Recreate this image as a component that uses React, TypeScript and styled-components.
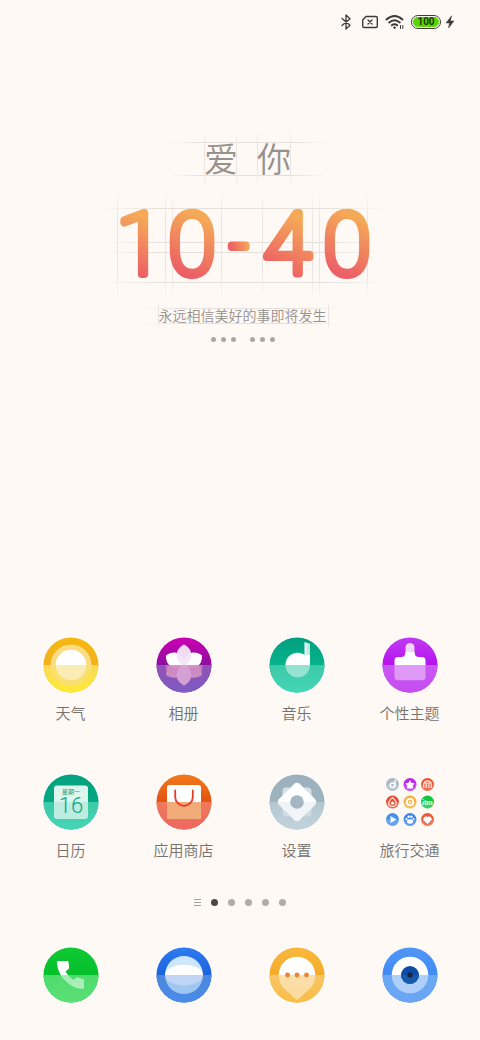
import React, { useId } from 'react';
import styled, { createGlobalStyle } from 'styled-components';

const GlobalStyle = createGlobalStyle`
  * { box-sizing: border-box; }
  body {
    margin: 0;
    background: #fef9f4;
    font-family: Roboto, "Noto Sans CJK SC", sans-serif;
  }
  button {
    border: 0;
    padding: 0;
    background: none;
    font: inherit;
    color: inherit;
    cursor: pointer;
  }
`;

const Screen = styled.main`
  display: flex;
  flex-direction: column;
  min-height: 100vh;
  padding-bottom: 35px;
`;

const StatusBar = styled.header`
  display: flex;
  align-items: center;
  justify-content: flex-end;
  height: 44px;
  padding-right: 25px;
`;

const StatusIcon = styled.svg<{ $gap: number }>`
  display: block;
  margin-right: ${(p) => p.$gap}px;
  fill: none;
  stroke: #3c3a39;
  stroke-linecap: round;
  stroke-linejoin: round;
`;

const Battery = styled.div`
  display: flex;
  width: 30px;
  height: 14px;
  margin-right: 4px;
  padding: 1px;
  border: 1px solid #3c3a39;
  border-radius: 7px;
`;

const BatteryLevel = styled.span`
  flex: 1;
  border-radius: 5px;
  background: #57d500;
  color: #1d3a08;
  font-size: 10px;
  font-weight: 700;
  line-height: 10px;
  text-align: center;
`;

const ClockWidget = styled.section`
  display: flex;
  flex-direction: column;
  align-items: center;
  padding: 86px 0 0 5px;
`;

const Guided = styled.div`
  position: relative;
  isolation: isolate;
  display: flex;
  justify-content: center;
`;

const GuideLines = styled.svg`
  position: absolute;
  z-index: -1;
  inset: 0;
  width: 100%;
  height: 100%;
`;

const Greeting = styled(Guided)`
  gap: 19px;
  width: 156px;
  height: 58px;
  margin-left: 10px;
  color: #96918e;
  font-family: "Noto Sans CJK SC", sans-serif;
  font-size: 34px;
  font-weight: 350;
  line-height: 56px;
`;

const Time = styled(Guided)`
  width: 282px;
  height: 108px;
  margin-top: 4px;
`;

const TimeFace = styled.svg`
  display: block;
  width: 100%;
  height: 100%;
  font-family: Roboto, sans-serif;
  font-size: 86px;
  font-weight: 100;
  stroke-width: 8px;
  stroke-linejoin: round;
  text-anchor: middle;
`;

const Motto = styled(Guided)`
  width: 196px;
  height: 28px;
  margin-top: 2px;
  color: #96918e;
  font-size: 14px;
  font-weight: 350;
  line-height: 28px;
`;

const MottoDots = styled.div`
  display: flex;
  gap: 14px;
  margin-top: 7px;
`;

const DotGroup = styled.div`
  display: flex;
  gap: 5px;
`;

const MottoDot = styled.i`
  width: 5px;
  height: 5px;
  border-radius: 50%;
  background: #aba7a4;
`;

const AppGrid = styled.section`
  display: grid;
  grid-template-columns: repeat(4, 1fr);
  row-gap: 48px;
  margin-top: auto;
  padding: 0 14px;
`;

const AppButton = styled.button`
  display: flex;
  flex-direction: column;
  align-items: center;
  gap: 9px;
`;

const AppLabel = styled.span`
  color: #75716e;
  font-size: 15px;
  line-height: 20px;
  font-weight: 350;
`;

const IconSvg = styled.svg`
  display: block;
  width: 60px;
  height: 60px;
`;

const Pager = styled.nav`
  display: flex;
  align-items: center;
  justify-content: center;
  gap: 10px;
  height: 12px;
  margin: 35px 0 37px;
`;

const PageDot = styled.button<{ $active?: boolean }>`
  width: 7px;
  height: 7px;
  border-radius: 50%;
  background: ${(p) => (p.$active ? '#4a4745' : '#b0acaa')};
`;

const FeedButton = styled.button`
  display: flex;
  flex-direction: column;
  gap: 2px;
  width: 7px;
`;

const FeedLine = styled.i`
  height: 1px;
  background: #a5a19e;
`;

const Dock = styled.nav`
  display: grid;
  grid-template-columns: repeat(4, 1fr);
  padding: 0 14px;
`;

function Guides({ w, h, xs, ys }: { w: number; h: number; xs: number[]; ys: number[] }) {
  const id = useId();
  return (
    <GuideLines viewBox={`0 0 ${w} ${h}`} aria-hidden="true">
      <defs>
        <linearGradient id={`${id}h`} gradientUnits="userSpaceOnUse" x1="0" x2={w}>
          <stop offset="0" stopColor="#e6e0db" stopOpacity="0" />
          <stop offset=".2" stopColor="#e6e0db" />
          <stop offset=".8" stopColor="#e6e0db" />
          <stop offset="1" stopColor="#e6e0db" stopOpacity="0" />
        </linearGradient>
        <linearGradient id={`${id}v`} gradientUnits="userSpaceOnUse" x1="0" y1="0" x2="0" y2={h}>
          <stop offset="0" stopColor="#ebe5e1" stopOpacity="0" />
          <stop offset=".25" stopColor="#ebe5e1" />
          <stop offset=".75" stopColor="#ebe5e1" />
          <stop offset="1" stopColor="#ebe5e1" stopOpacity="0" />
        </linearGradient>
      </defs>
      {ys.map((y) => (
        <rect key={y} x="0" y={y} width={w} height="1" fill={`url(#${id}h)`} />
      ))}
      {xs.map((x) => (
        <rect key={x} x={x} y="0" width="1" height={h} fill={`url(#${id}v)`} />
      ))}
    </GuideLines>
  );
}

/* Each character carries its own diagonal gradient. */
const timeChars = [
  { c: '1', x: 38, y: 82, size: 86, from: [22, 78], to: [44, 26] },
  { c: '0', x: 90, y: 82, size: 86, from: [79, 80], to: [101, 26] },
  { c: '-', x: 137, y: 74, size: 60, from: [128, 54], to: [147, 50] },
  { c: '4', x: 185, y: 82, size: 86, from: [168, 76], to: [196, 26] },
  { c: '0', x: 245, y: 82, size: 86, from: [234, 80], to: [256, 26] },
];

function TimeDigits() {
  return (
    <TimeFace viewBox="0 0 282 108">
      <defs>
        {timeChars.map((t, i) => (
          <linearGradient
            key={i}
            id={`digit${i}`}
            gradientUnits="userSpaceOnUse"
            x1={t.from[0]}
            y1={t.from[1]}
            x2={t.to[0]}
            y2={t.to[1]}
          >
            <stop offset="0" stopColor="#ec5f66" />
            <stop offset="1" stopColor="#f5a957" />
          </linearGradient>
        ))}
      </defs>
      <text>
        {timeChars.map((t, i) => (
          <tspan
            key={i}
            x={t.x}
            y={t.y}
            fontSize={t.size}
            fill={`url(#digit${i})`}
            stroke={`url(#digit${i})`}
          >
            {t.c}
          </tspan>
        ))}
      </text>
    </TimeFace>
  );
}

type Tone = [string, string];

interface DiscProps {
  top: Tone;
  bottom: Tone;
  veil?: number;
  children: React.ReactNode;
  over?: React.ReactNode;
}

/* Round icon split by a horizon: the lower half is veiled with its own tone. */
function Disc({ top, bottom, veil = 0.5, children, over }: DiscProps) {
  const id = useId();
  const lower = 'M-27.5 0H27.5A27.5 27.5 0 0 1-27.5 0Z';
  return (
    <IconSvg viewBox="-30 -30 60 60" aria-hidden="true">
      <defs>
        <linearGradient id={`${id}t`} x2="0" y2="1">
          <stop offset="0" stopColor={top[0]} />
          <stop offset=".5" stopColor={top[1]} />
        </linearGradient>
        <linearGradient id={`${id}b`} x2="0" y2="1">
          <stop offset="0" stopColor={bottom[0]} />
          <stop offset="1" stopColor={bottom[1]} />
        </linearGradient>
      </defs>
      <circle r="28.7" fill="#fff" opacity=".7" />
      <circle r="27.5" fill={`url(#${id}t)`} />
      <path d={lower} fill={`url(#${id}b)`} />
      {children}
      <path d={lower} fill={`url(#${id}b)`} opacity={veil} />
      {over}
    </IconSvg>
  );
}

const Weather = () => (
  <Disc
    top={['#f7b80f', '#f3b01c']}
    bottom={['#fad95a', '#fdea35']}
    veil={0}
  >
    <circle r="20.5" fill="#fbdc85" />
    <circle r="15.2" fill="#fff" />
    <path d="M-20.500 0H20.500A20.500 20.500 0 0 1-20.500 0Z" fill="#fae070" />
    <path d="M-15.200 0H15.200A15.200 15.200 0 0 1-15.200 0Z" fill="#fbebb4" />
  </Disc>
);

const petal = 'M0 2C-5-2-8-7-7.200-12C-6.500-16-3.500-18.500 0-20.500C3.500-18.500 6.500-16 7.200-12C8-7 5-2 0 2Z';

const Gallery = () => (
  <Disc top={['#cc00b4', '#8d0fa0']} bottom={['#9452b4', '#7c5cc4']} veil={0.35}>
    <g fill="#f2abcb">
      <path d={petal} transform="rotate(120)" />
      <path d={petal} transform="rotate(240)" />
    </g>
    <path d={petal} transform="rotate(62)" fill="#fff" />
    <path d={petal} transform="rotate(-62)" fill="#fff" />
    <path d="M-18.500 0H18.500Q18.500 8 12 9H-12Q-18.500 8-18.500 0Z" fill="#f0a3c6" opacity=".75" />
    <path d={petal} transform="rotate(180)" fill="#fbc9e0" />
    <path d={petal} fill="#f4e6f8" opacity=".95" />
  </Disc>
);

const Music = () => (
  <Disc top={['#009f7f', '#08b28c']} bottom={['#3cc9a8', '#45d6b6']} veil={0.55}>
    <path d="M7.500-23L13-21V0H7.500Z" fill="#f0fbf8" />
    <path d="M9.500-22.300L13-21V0H9.500Z" fill="#bdebdd" />
    <circle cx=".7" r="12.300" fill="#fff" />
    <path d="M7.500-10H13V0H7.500Z" fill="#fff" />
  </Disc>
);

const Themes = () => (
  <Disc top={['#c13af3', '#b413ec']} bottom={['#cb58f2', '#c54df0']} veil={0.6}>
    <path d="M-4.500-17.500A4.500 4.500 0 0 1 4.500-17.500V-8H-4.500Z" fill="#f0d5fc" />
    <path d="M-4.500-13Q-4.500-8-9-8H-12Q-15.500-8-15.500-4.500V12Q-15.500 15.300-12 15.300H12Q15.500 15.300 15.500 12V-4.500Q15.500-8 12-8H9Q4.500-8 4.500-13Z" fill="#fff" />
  </Disc>
);

const Calendar = () => (
  <Disc
    top={['#00a37e', '#05a783']}
    bottom={['#3ccaa8', '#45d6b6']}
    veil={0.2}
    over={
      <g fill="#0fa684" textAnchor="middle">
        <text y="-8" fontSize="6" fontWeight="400">星期一</text>
        <text y="11" fontSize="22" fontWeight="300">16</text>
      </g>
    }
  >
    <rect x="-17" y="-16.500" width="34" height="33.500" rx="3" fill="#dcf5ed" />
  </Disc>
);

const Store = () => (
  <Disc
    top={['#f37a1c', '#e2530f']}
    bottom={['#f07a5c', '#ee6660']}
    veil={0}
    over={<path d="M-8.800-11.500V-5A8.800 8.800 0 0 0 8.800-5V-11.500" fill="none" stroke="#e8392a" strokeWidth="1.800" strokeLinecap="round" />}
  >
    <rect x="-17" y="-17" width="34" height="34" rx="2.500" fill="#fff" />
    <path d="M-17 0H17V14.500Q17 17 14.500 17H-14.500Q-17 17-17 14.500Z" fill="#f0ab78" />
  </Disc>
);

const Settings = () => (
  <Disc
    top={['#9db1bd', '#9fb3bf']}
    bottom={['#b4c6d0', '#c3d3dc']}
    veil={0.2}
    over={<circle r="6.800" fill="#a3b6c2" />}
  >
    <rect x="-14.500" y="-14.500" width="29" height="29" rx="4" fill="#d5e0e7" />
    <path d="M-3-18Q0-20.500 3-18L8-12.500L12.500-8.500L18-3Q20.500 0 18 3L12.500 8.500L8 12.500L3 18Q0 20.500-3 18L-8 12.500L-12.500 8.500L-18 3Q-20.500 0-18-3L-12.500-8.500L-8-12.500Z" fill="#fff" />
  </Disc>
);

const Phone = () => (
  <Disc top={['#10c935', '#04c02a']} bottom={['#4fdb6c', '#5ce078']} veil={0.5}>
    <path d="M-13.500-14H-3.500Q-2.500-14-2.500-13L-1.800-7.500Q-1.700-6.500-2.500-6L-5.500-3.500Q-2.500 2 2.500 5L5 2.800Q5.800 2 6.800 2.500L12 4Q13 4.300 13 5.300V12.800Q13 14 11.800 14Q2 13.500-6 5.500Q-13.500-2-14-12.500Q-14.200-14-13.500-14Z" fill="#fff" />
  </Disc>
);

const Browser = () => (
  <Disc top={['#2e7bf0', '#1c62dc']} bottom={['#4d86dd', '#4a8ce8']} veil={0.35}>
    <circle r="19" fill="#cde7fa" />
    <ellipse rx="19" ry="10.300" fill="#fff" />
  </Disc>
);

const Messages = () => (
  <Disc
    top={['#f9b83c', '#f5aa2b']}
    bottom={['#f8c566', '#fabd45']}
    veil={0.55}
    over={
      <g fill="#ea8330">
        <circle cx="-9.500" r="2.400" />
        <circle r="2.400" />
        <circle cx="9.500" r="2.400" />
      </g>
    }
  >
    <path d="M-18.300 0A18.300 18.300 0 0 1 18.300 0C18.300 8 14 13.500 9 17L1.500 24Q0 25-1.500 24L-9 17C-14 13.500-18.300 8-18.300 0Z" fill="#fff" />
  </Disc>
);

const Camera = () => (
  <Disc
    top={['#5197f7', '#3f8af3']}
    bottom={['#6aaaf2', '#6ba4f5']}
    veil={0.55}
    over={
      <>
        <circle r="9" fill="#0d4da6" />
        <path d="M-9 0A9 9 0 0 0 9 0Z" fill="#1659ad" />
        <circle r="2.700" fill="#1b2340" />
      </>
    }
  >
    <circle r="18.300" fill="#fff" />
  </Disc>
);

const minis: { color: string; art: React.ReactNode }[] = [
  { color: '#a9bac4', art: <><circle cx="0" cy=".8" r="2.300" fill="none" stroke="#fff" strokeWidth="1.500" /><path d="M2.500-4.500V2.500" stroke="#fff" strokeWidth="1.500" /></> },
  { color: '#bb22ee', art: <path d="M0-4.500L1.500-1.800L4.800-1.200L2.700 1L3 4H-3L-2.700 1L-4.800-1.200L-1.500-1.800Z" fill="#fff" /> },
  { color: '#ee4f28', art: <path d="M-3.800 3.500V-.5A3.800 3.200 0 0 1 3.800-.5V3.500M-1.300 3.500V-2M1.300 3.500V-2M-3.800-1.500H3.800" fill="none" stroke="#ffe9e2" strokeWidth="1.200" /> },
  { color: '#ea4a2c', art: <><path d="M0-4.500Q4.200-.5 3.800 1.500A3.800 3 0 0 1-3.800 1.500Q-4-1 0-4.500Z" fill="none" stroke="#ffe1da" strokeWidth="1.200" /><circle cy="1" r="1.500" fill="#fff" /></> },
  { color: '#f7b03a', art: <><circle r="3.200" fill="none" stroke="#fff" strokeWidth="1.800" /><circle r="1" fill="#fff" /></> },
  { color: '#0fc83c', art: <text y="2.500" fontSize="7" fontWeight="700" textAnchor="middle" fill="#e6ffe9">itm</text> },
  { color: '#4590ee', art: <path d="M-2-3.500L4 0L-2 3.500Z" fill="#fff" /> },
  { color: '#3c86e8', art: <g fill="#fff"><ellipse cy="2" rx="3" ry="2.200" /><circle cx="-3.500" cy="-.5" r="1.100" /><circle cx="3.500" cy="-.5" r="1.100" /><circle cx="-1.400" cy="-2.800" r="1.200" /><circle cx="1.400" cy="-2.800" r="1.200" /></g> },
  { color: '#ec5a35', art: <path d="M0 4L-3.500.6A2.200 2.200 0 0 1 0-2A2.200 2.200 0 0 1 3.500.6Z" fill="#fff" stroke="#fff" /> },
];

const Folder = () => (
  <IconSvg viewBox="-30 -30 60 60" aria-hidden="true">
    {minis.map((m, i) => (
      <g key={i} transform={`translate(${((i % 3) - 1) * 17.5} ${(Math.floor(i / 3) - 1) * 17.5})`}>
        <circle r="6.500" fill={m.color} />
        {m.art}
        <path d="M-6.500 0H6.500A6.500 6.500 0 0 1-6.500 0Z" fill="#fff" opacity=".18" />
      </g>
    ))}
  </IconSvg>
);

const apps = [
  { name: '天气', Icon: Weather },
  { name: '相册', Icon: Gallery },
  { name: '音乐', Icon: Music },
  { name: '个性主题', Icon: Themes },
  { name: '日历', Icon: Calendar },
  { name: '应用商店', Icon: Store },
  { name: '设置', Icon: Settings },
  { name: '旅行交通', Icon: Folder },
];

const dockApps = [
  { name: '电话', Icon: Phone },
  { name: '浏览器', Icon: Browser },
  { name: '短信', Icon: Messages },
  { name: '相机', Icon: Camera },
];

export default function App() {
  return (
    <Screen>
      <GlobalStyle />
      <StatusBar>
        <StatusIcon $gap={9} width="12" height="16" viewBox="0 0 12 16" strokeWidth="1.300">
          <path d="M2 4.500L10 11.200L6 15V1L10 4.800L2 11.500" />
        </StatusIcon>
        <StatusIcon $gap={6} width="18" height="14" viewBox="0 0 18 14" strokeWidth="1.400">
          <path d="M5 1.500H15Q16.300 1.500 16.300 2.800V11.200Q16.300 12.500 15 12.500H3Q1.700 12.500 1.700 11.200V5ZM7 5L11 9M11 5L7 9" />
        </StatusIcon>
        <StatusIcon $gap={6} width="20" height="16" viewBox="0 0 20 16" strokeWidth="1.900">
          <path d="M1.500 5.500Q9.500-1.500 17.500 5.500M4.200 8.500Q9.500 4 14.800 8.500M6.800 11.300Q9.500 9.200 12.200 11.300" />
          <circle cx="9.500" cy="13.700" r=".8" fill="#3c3a39" strokeWidth="1" />
          <path d="M15.500 14.500V11.500M17.800 11.500V14.500" strokeWidth="1" />
        </StatusIcon>
        <Battery>
          <BatteryLevel>100</BatteryLevel>
        </Battery>
        <StatusIcon $gap={0} width="10" height="14" viewBox="0 0 10 14" strokeWidth=".5">
          <path d="M6.500 1L1 8H4.500L3.500 13L9 6H5.500Z" fill="#3c3a39" />
        </StatusIcon>
      </StatusBar>

      <ClockWidget>
        <Greeting>
          <Guides w={156} h={58} xs={[34, 66, 87, 120]} ys={[12, 45]} />
          <span>爱</span>
          <span>你</span>
        </Greeting>
        <Time>
          <Guides w={282} h={108} xs={[15, 63, 70, 119, 160, 210, 217, 265]} ys={[16, 50, 60, 90]} />
          <TimeDigits />
        </Time>
        <Motto>
          <Guides w={196} h={28} xs={[13, 183]} ys={[6, 21]} />
          <span>永远相信美好的事即将发生</span>
        </Motto>
        <MottoDots>
          {[0, 1].map((g) => (
            <DotGroup key={g}>
              <MottoDot />
              <MottoDot />
              <MottoDot />
            </DotGroup>
          ))}
        </MottoDots>
      </ClockWidget>

      <AppGrid>
        {apps.map(({ name, Icon }) => (
          <AppButton key={name}>
            <Icon />
            <AppLabel>{name}</AppLabel>
          </AppButton>
        ))}
      </AppGrid>

      <Pager>
        <FeedButton aria-label="负一屏">
          <FeedLine />
          <FeedLine />
          <FeedLine />
        </FeedButton>
        {[0, 1, 2, 3, 4].map((n) => (
          <PageDot key={n} $active={n === 0} aria-label={`第${n + 1}页`} />
        ))}
      </Pager>

      <Dock>
        {dockApps.map(({ name, Icon }) => (
          <AppButton key={name} aria-label={name}>
            <Icon />
          </AppButton>
        ))}
      </Dock>
    </Screen>
  );
}
